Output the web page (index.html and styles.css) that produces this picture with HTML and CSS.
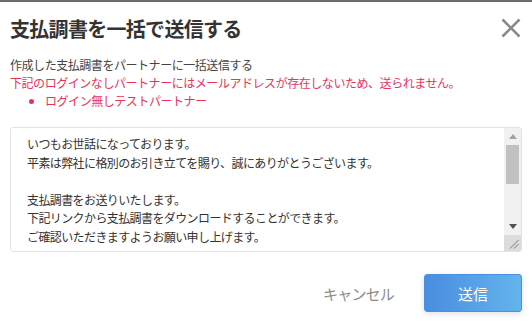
FILE: index.html
```html
<!DOCTYPE html>
<html lang="ja">
<head>
    <meta charset="UTF-8">
    <meta name="viewport" content="width=device-width, initial-scale=1.0">
    <title>支払調書を一括で送信する</title>
    <link rel="stylesheet" href="styles.css">
</head>
<body>
    <div class="dialog">
        <div class="dialog-header">
            <h1>支払調書を一括で送信する</h1>
            <button type="button" class="close-btn" aria-label="閉じる">
                <svg width="20" height="20" viewBox="0 0 20 20">
                    <path d="M1.5 1.5 L18.5 18.5 M18.5 1.5 L1.5 18.5" stroke="#8a8a8a" stroke-width="2.6" fill="none"/>
                </svg>
            </button>
        </div>
        <div class="dialog-body">
            <p class="lead">作成した支払調書をパートナーに一括送信する</p>
            <p class="warning">下記のログインなしパートナーにはメールアドレスが存在しないため、送られません。</p>
            <ul class="partner-list">
                <li>ログイン無しテストパートナー</li>
            </ul>
            <div class="mail-box">
                <textarea class="mail-body">いつもお世話になっております。
平素は弊社に格別のお引き立てを賜り、誠にありがとうございます。

支払調書をお送りいたします。
下記リンクから支払調書をダウンロードすることができます。
ご確認いただきますようお願い申し上げます。

ダウンロードURL：
{{download_url}}

ご不明な点がございましたら、お気軽にお問い合わせください。
今後ともよろしくお願いいたします。
</textarea>
                <div class="scrollbar">
                    <div class="scroll-btn">
                        <svg width="8" height="5" viewBox="0 0 8 5"><path d="M0 5 L4 0 L8 5 Z" fill="#a3a3a3"/></svg>
                    </div>
                    <div class="scroll-track">
                        <div class="scroll-thumb"></div>
                    </div>
                    <div class="scroll-btn">
                        <svg width="8" height="5" viewBox="0 0 8 5"><path d="M0 0 L8 0 L4 5 Z" fill="#505050"/></svg>
                    </div>
                    <div class="resizer">
                        <svg width="10" height="10" viewBox="0 0 10 10">
                            <path d="M1 9.5 L9.5 1 M5 9.5 L9.5 5" stroke="#7a7a7a" stroke-width="1" fill="none"/>
                        </svg>
                    </div>
                </div>
            </div>
        </div>
        <div class="dialog-footer">
            <button type="button" class="cancel-btn">キャンセル</button>
            <button type="submit" class="send-btn">送信</button>
        </div>
    </div>
</body>
</html>
```

FILE: styles.css
```css
body {
    font-family: "Noto Sans CJK JP", "Noto Sans", sans-serif;
    margin: 0;
    padding: 0;
    background-color: #fff;
    color: #333;
}
.dialog {
    border-top: 2px solid #6b6b6b;
    padding: 0 10px;
    height: 322px;
    box-sizing: border-box;
}
.dialog-header {
    display: flex;
    justify-content: space-between;
    align-items: center;
    height: 52px;
}
h1 {
    margin: 0;
    font-size: 20px;
    font-weight: bold;
    letter-spacing: -0.7px;
    color: #333;
}
.close-btn {
    background: none;
    border: none;
    padding: 0;
    width: 20px;
    height: 20px;
    margin-right: 1px;
    cursor: pointer;
}
.close-btn svg {
    display: block;
}
.dialog-body {
    padding-top: 2px;
    font-size: 12px;
    line-height: 18px;
    letter-spacing: -0.45px;
}
.lead {
    margin: 0;
    color: #444;
}
.warning {
    margin: 0;
    color: #e8345a;
}
.partner-list {
    margin: 0;
    padding-left: 35px;
    color: #e8345a;
}
.mail-box {
    display: flex;
    height: 125px;
    margin-top: 17px;
    border: 1px solid #dde3e8;
    border-radius: 3px;
    box-sizing: border-box;
    overflow: hidden;
}
.mail-body {
    flex: 1;
    min-width: 0;
    box-sizing: border-box;
    padding: 7px 16px;
    border: none;
    outline: none;
    font-family: inherit;
    font-size: 12px;
    line-height: 18.5px;
    letter-spacing: -0.6px;
    color: #333;
    overflow: hidden;
    resize: none;
}
.scrollbar {
    width: 17px;
    display: flex;
    flex-direction: column;
    background: #f1f1f1;
}
.scroll-btn {
    height: 17px;
    display: flex;
    justify-content: center;
    align-items: center;
}
.scroll-track {
    flex: 1;
}
.scroll-thumb {
    height: 39px;
    margin: 0 2px;
    background: #c1c1c1;
}
.resizer {
    height: 16px;
    display: flex;
    justify-content: flex-end;
    align-items: flex-end;
    padding: 0 2px 2px 0;
    box-sizing: border-box;
    background: #dcdcdc;
}
.resizer svg {
    display: block;
}
.dialog-footer {
    display: flex;
    justify-content: flex-end;
    align-items: center;
    margin-top: 22px;
}
.cancel-btn {
    background: none;
    border: none;
    padding: 0 30px;
    height: 38px;
    font-family: inherit;
    font-size: 15px;
    letter-spacing: -0.8px;
    color: #8c8c8c;
    cursor: pointer;
}
.send-btn {
    width: 98px;
    height: 38px;
    border: 1px solid #4a90e2;
    border-radius: 3px;
    background: linear-gradient(to right, #4a8de0, #63b4ec);
    box-shadow: 0 2px 6px rgba(0, 0, 0, 0.12);
    font-family: inherit;
    font-size: 15px;
    color: #fff;
    cursor: pointer;
}
```
